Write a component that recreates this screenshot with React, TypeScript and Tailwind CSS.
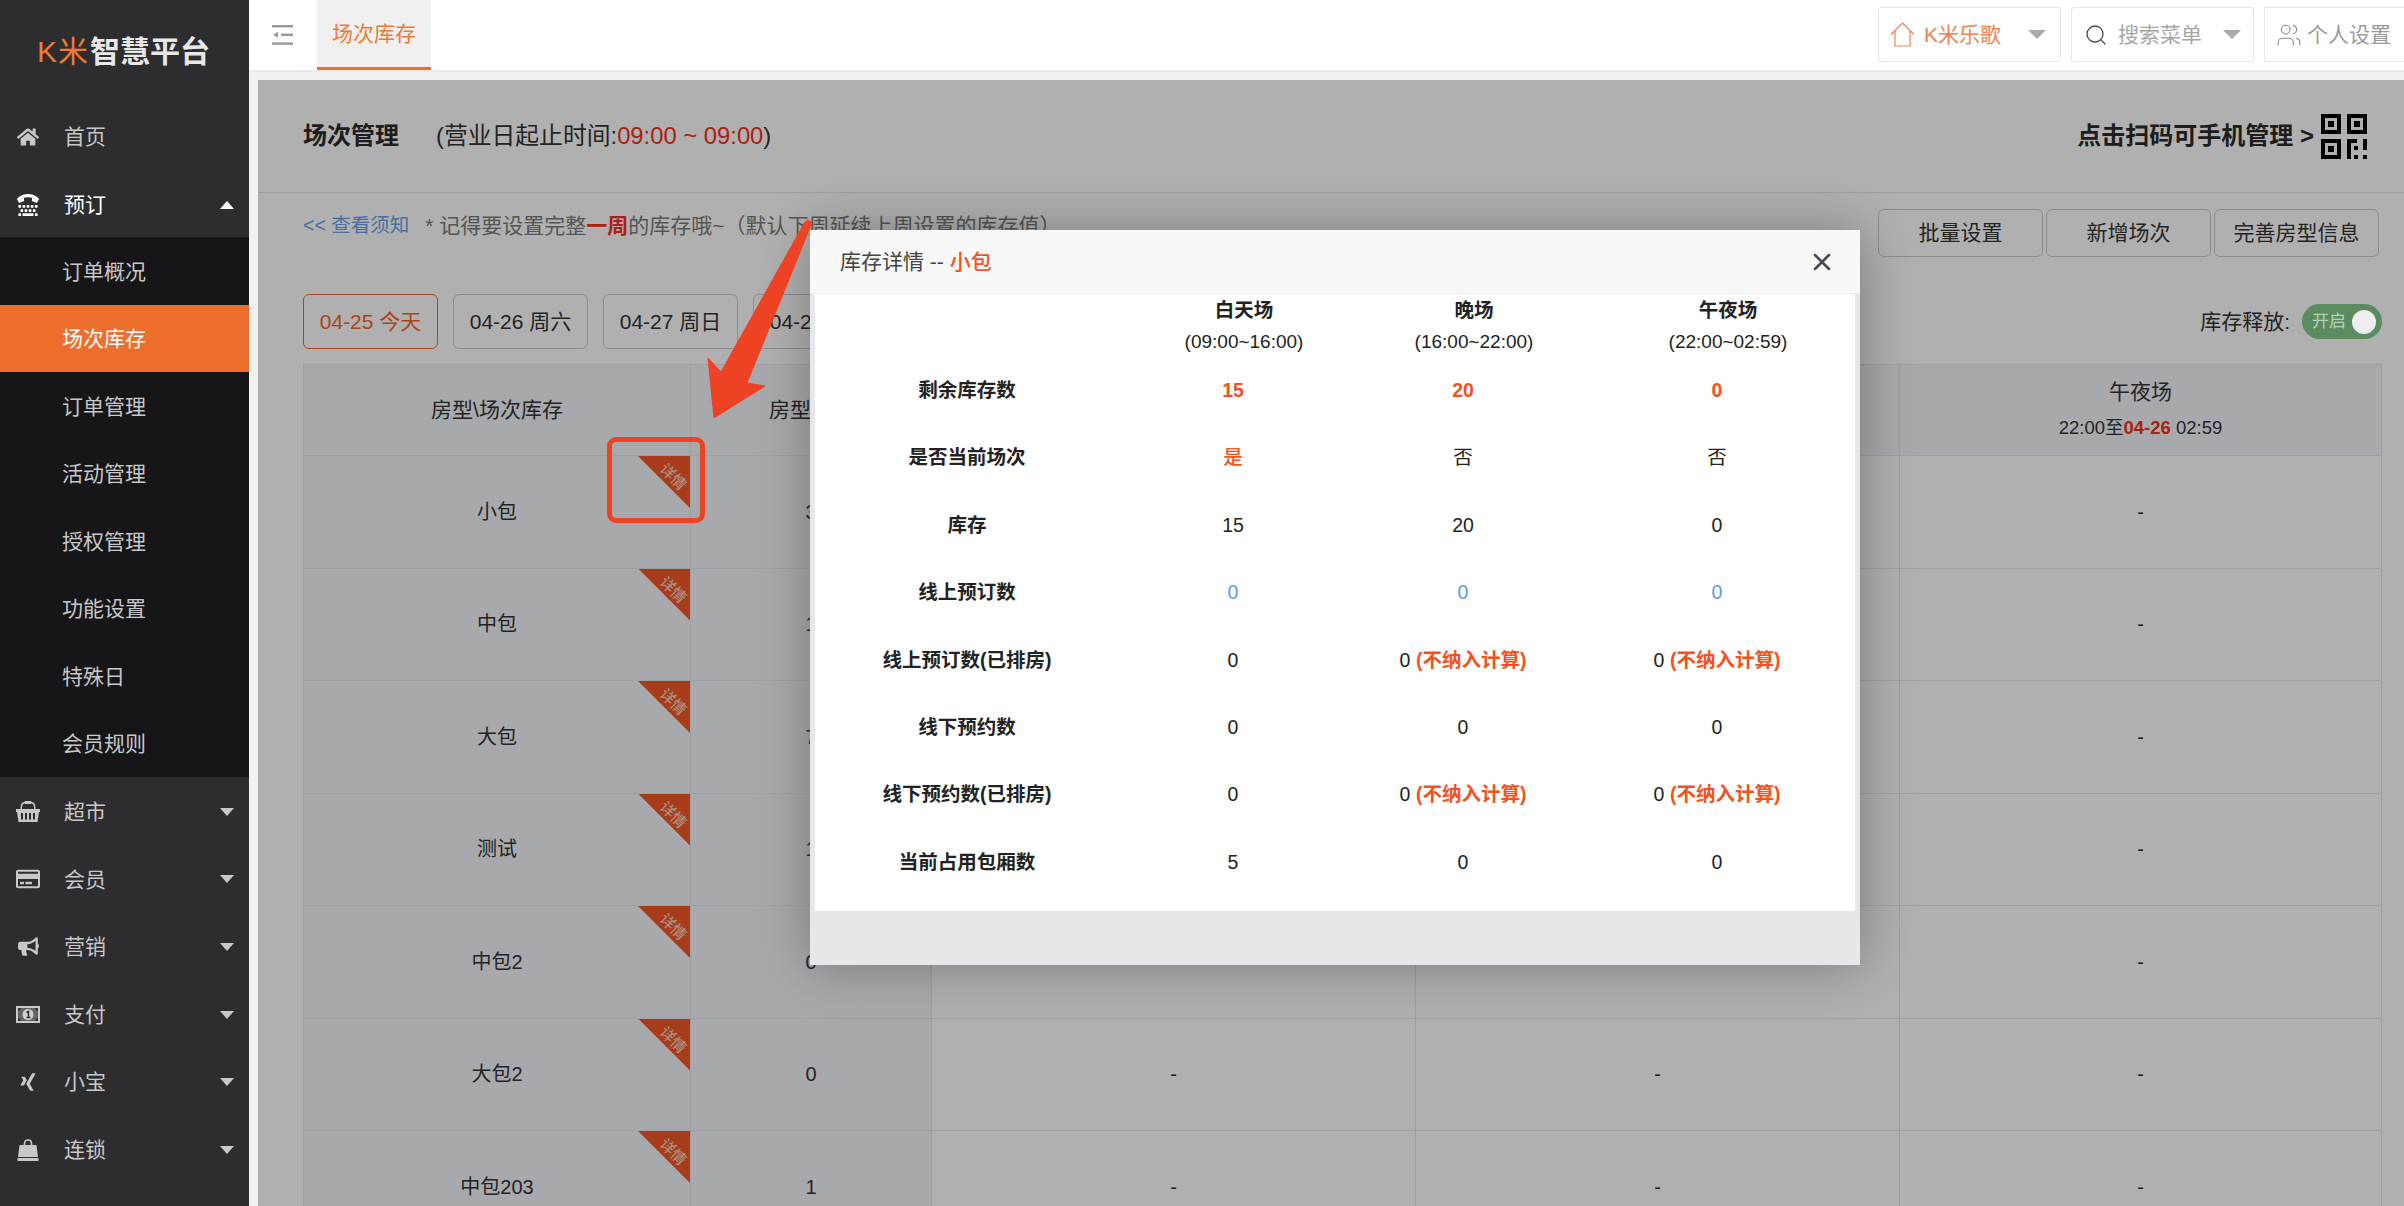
import React from "react";
import { FaHome, FaTty, FaRegCreditCard, FaBullhorn, FaXing } from "react-icons/fa";
import { Search, Users, X } from "lucide-react";

const Caret = ({ up = false, cls = "text-[#c8c8c8]", w = 14, h = 8 }: { up?: boolean; cls?: string; w?: number; h?: number }) => (
  <svg width={w} height={h} viewBox="0 0 14 8" preserveAspectRatio="none" className={cls}>
    <polygon points={up ? "7,0 14,8 0,8" : "0,0 14,0 7,8"} fill="currentColor" />
  </svg>
);

const MoneyIcon = () => (
  <svg width="24" height="17" viewBox="0 0 24 17">
    <rect x="1" y="1" width="22" height="15" fill="none" stroke="currentColor" strokeWidth="2" />
    <path d="M1 5 C4 5 5 3 5 1 H19 C19 3 20 5 23 5 V12 C20 12 19 14 19 16 H5 C5 14 4 12 1 12Z" fill="currentColor" opacity="0.35" />
    <circle cx="12" cy="8.5" r="5.5" fill="#d0d0d0" />
    <path d="M10.5 6.5 L12.5 5.5 V11.5 M10.5 11.5 H14.5" fill="none" stroke="#2d2d30" strokeWidth="1.4" />
  </svg>
);

const BasketIcon = () => (
  <svg width="24" height="21" viewBox="0 0 24 21">
    <path d="M5 9 C5 3 7 1.5 9 1.5 H15 C17 1.5 19 3 19 9" fill="none" stroke="currentColor" strokeWidth="1.5" />
    <rect x="8.5" y="0" width="7" height="3" rx="1" fill="currentColor" />
    <path fillRule="evenodd" fill="currentColor" d="M0 8 H24 V11 H23 L21.5 21 H2.5 L1 11 H0Z M5 12 V18.5 H7 V12Z M9 12 V18.5 H11 V12Z M13 12 V18.5 H15 V12Z M17 12 V18.5 H19 V12Z" />
  </svg>
);

const BagIcon = () => (
  <svg width="22" height="22" viewBox="0 0 22 22">
    <path d="M7.5 7 V4.5 C7.5 2 9 1 11 1 C13 1 14.5 2 14.5 4.5 V7" fill="none" stroke="currentColor" strokeWidth="1.6" />
    <path fill="currentColor" d="M2.5 6 H19.5 L21 18 H1Z" />
    <rect x="0.5" y="19" width="21" height="3" fill="currentColor" />
  </svg>
);

const topMenus = [
  { label: "超市", icon: <BasketIcon /> },
  { label: "会员", icon: <FaRegCreditCard size={24} /> },
  { label: "营销", icon: <FaBullhorn size={21} /> },
  { label: "支付", icon: <MoneyIcon /> },
  { label: "小宝", icon: <FaXing size={20} /> },
  { label: "连锁", icon: <BagIcon /> },
];
const subMenus = ["订单概况", "场次库存", "订单管理", "活动管理", "授权管理", "功能设置", "特殊日", "会员规则"];

function Sidebar() {
  return (
    <aside className="w-[249px] shrink-0 bg-[#2d2d30] text-[21px] text-[#c8c8c8]">
      <div className="h-[102px] pt-[31px] pl-[37px] flex items-start leading-[42px]">
        <span className="text-[30px] font-normal text-[#ee7a35] tracking-[1px]">K米</span>
        <span className="ml-[1px] text-[30px] font-bold text-[#e8e8e8]">智慧平台</span>
      </div>
      <div className="h-[68px] pt-[2px] flex items-center">
        <span className="w-[64px] flex justify-center pr-[8px]"><FaHome size={22} /></span>
        <span>首页</span>
      </div>
      <div className="h-[67px] pt-[2px] flex items-center text-white">
        <span className="w-[64px] flex justify-center pr-[8px]"><FaTty size={22} /></span>
        <span className="flex-1">预订</span>
        <span className="pr-[15px] flex"><Caret up cls="text-white" /></span>
      </div>
      <div className="bg-[#161619]">
        {subMenus.map((s) => (
          <div
            key={s}
            className={`h-[67.5px] pl-[62px] pt-[1px] flex items-center ${s === "场次库存" ? "bg-[#ee6f2d] text-white" : ""}`}
          >
            {s}
          </div>
        ))}
      </div>
      {topMenus.map((m) => (
        <div key={m.label} className="h-[67.6px] pt-[2px] flex items-center">
          <span className="w-[64px] flex justify-center pr-[8px]">{m.icon}</span>
          <span className="flex-1">{m.label}</span>
          <span className="pr-[15px] flex"><Caret /></span>
        </div>
      ))}
    </aside>
  );
}

function TopBar() {
  return (
    <header className="h-[72px] shrink-0 bg-white border-b-2 border-[#e9e9e9] flex items-start">
      <div className="w-[68px] h-[70px] flex items-center pl-[23px]">
        <svg width="21" height="20" viewBox="0 0 21 20">
          <rect x="0" y="0" width="21" height="2.4" fill="#999" />
          <rect x="9" y="8.6" width="12" height="2.4" fill="#999" />
          <polygon points="1,9.8 6,6.8 6,12.8" fill="#999" />
          <rect x="0" y="17.4" width="21" height="2.4" fill="#999" />
        </svg>
      </div>
      <div className="w-[114px] h-[70px] bg-[#f0f0f0] border-b-[3px] border-[#ee6f2d] text-[#ee7a35] text-[21px] flex items-center justify-center">
        场次库存
      </div>
      <div className="flex-1" />
      <div className="mt-[7px] w-[183px] h-[55px] border border-[#e6e6e6] rounded-[3px] flex items-center pl-[11px] pr-[14px] text-[21px] text-[#f08150]">
        <svg width="25" height="25" viewBox="0 0 25 25" fill="none" stroke="currentColor" strokeWidth="1.2">
          <path d="M1 12.5 L12.5 1 L24 12.5 M5 9 V24 H20 V9" />
        </svg>
        <span className="ml-[9px] flex-1">K米乐歌</span>
        <Caret cls="text-[#aaaaaa]" w={18} h={9} />
      </div>
      <div className="ml-[10px] mt-[7px] w-[183px] h-[55px] border border-[#e6e6e6] rounded-[3px] flex items-center pl-[12px] pr-[12px] text-[21px] text-[#a6a6a6]">
        <Search size={24} strokeWidth={1.3} className="text-[#444]" />
        <span className="ml-[10px] flex-1">搜索菜单</span>
        <Caret cls="text-[#aaaaaa]" w={18} h={9} />
      </div>
      <div className="ml-[10px] mt-[7px] flex-1 max-w-[140px] h-[55px] border border-r-0 border-[#e6e6e6] flex items-center pl-[11px] text-[21px] text-[#999]">
        <Users size={26} strokeWidth={1} className="text-[#888]" />
        <span className="ml-[5px]">个人设置</span>
      </div>
    </header>
  );
}

const QrIcon = () => (
  <svg width="46" height="45" viewBox="0 0 46 45">
    <path fill="#000" fillRule="evenodd" d="M0 0H20V20H0ZM4 4V16H16V4ZM7 7H13V13H7Z" />
    <path fill="#000" fillRule="evenodd" d="M26 0H46V20H26ZM30 4V16H42V4ZM33 7H39V13H33Z" />
    <path fill="#000" fillRule="evenodd" d="M0 25H20V45H0ZM4 29V41H16V29ZM7 32H13V38H7Z" />
    <path fill="#000" d="M26 25H36V29H30V45H26ZM33 32H37V36H33ZM42 25H46V36H42ZM33 41H37V45H33ZM42 41H46V45H42Z" />
  </svg>
);

const rows = [
  ["小包", "3"],
  ["中包", "1"],
  ["大包", "7"],
  ["测试", "1"],
  ["中包2", "0"],
  ["大包2", "0"],
  ["中包203", "1"],
];

const cellLine = "border-r border-b border-[#e5e7eb]";

function RoomTable() {
  return (
    <div className="mt-[15px] ml-[45px] mr-[22px] border-l border-t border-[#e5e7eb]">
      <div className="grid grid-cols-[387px_241px_484px_484px_1fr] h-[91px] bg-[#f3f5f9] text-[21px] text-[#333]">
        <div className={`${cellLine} flex items-center justify-center`}>房型\场次库存</div>
        <div className={`${cellLine} flex items-center justify-center`}>房型库存</div>
        {[
          ["白天场", "09:00至16:00"],
          ["晚场", "16:00至22:00"],
        ].map(([a, b]) => (
          <div key={a} className={`${cellLine} flex flex-col items-center justify-center`}>
            <span>{a}</span>
            <span className="text-[18px]">{b}</span>
          </div>
        ))}
        <div className={`${cellLine} flex flex-col items-center justify-center gap-[10px] pb-[2px]`}>
          <span className="text-[21px] leading-[28px]">午夜场</span>
          <span className="text-[18.5px] leading-[24px]">
            22:00至<b className="text-[#f5301c]">04-26</b> 02:59
          </span>
        </div>
      </div>
      {rows.map(([name, n]) => (
        <div key={name} className="grid grid-cols-[387px_241px_484px_484px_1fr] h-[112.5px] text-[20px] text-[#333]">
          <div className={`${cellLine} bg-[#f3f5f9] relative flex items-center justify-center`}>
            {name}
            <div className="absolute top-0 right-0 w-[52px] h-[52px] bg-[#f35726] [clip-path:polygon(0_0,100%_0,100%_100%)]">
              <span className="absolute left-[20px] top-[12px] w-[30px] text-[15px] leading-[18px] text-white/80 rotate-45">详情</span>
            </div>
          </div>
          <div className={`${cellLine} bg-[#f3f5f9] flex items-center justify-center`}>{n}</div>
          <div className={`${cellLine} flex items-center justify-center`}>-</div>
          <div className={`${cellLine} flex items-center justify-center`}>-</div>
          <div className={`${cellLine} flex items-center justify-center`}>-</div>
        </div>
      ))}
    </div>
  );
}

const orange = "text-[#f4511e]";
const Nc = () => <b className={`${orange} font-semibold`}> (不纳入计算)</b>;

const modalRows: { label: string; v: React.ReactNode[] }[] = [
  { label: "剩余库存数", v: [<b className={orange}>15</b>, <b className={orange}>20</b>, <b className={orange}>0</b>] },
  { label: "是否当前场次", v: [<b className={`${orange} font-medium`}>是</b>, "否", "否"] },
  { label: "库存", v: ["15", "20", "0"] },
  { label: "线上预订数", v: [<span className="text-[#5c9ce6]">0</span>, <span className="text-[#5c9ce6]">0</span>, <span className="text-[#5c9ce6]">0</span>] },
  { label: "线上预订数(已排房)", v: ["0", <>0<Nc /></>, <>0<Nc /></>] },
  { label: "线下预约数", v: ["0", "0", "0"] },
  { label: "线下预约数(已排房)", v: ["0", <>0<Nc /></>, <>0<Nc /></>] },
  { label: "当前占用包厢数", v: ["5", "0", "0"] },
];

function Modal() {
  return (
    <div className="absolute z-20 left-[552px] top-[150px] w-[1050px] h-[735px] bg-[#e6e7ea] shadow-[1px_1px_50px_rgba(0,0,0,0.3)] flex flex-col">
      <div className="h-[64px] shrink-0 bg-[#f8f8f8] border-b border-[#eeeeee] flex items-center pl-[30px] pr-[24px] text-[21px] text-[#444]">
        <span className="flex-1">
          库存详情 -- <span className={`${orange} font-medium`}>小包</span>
        </span>
        <X size={28} strokeWidth={2.2} className="text-[#4a4a55]" />
      </div>
      <div className="mx-[5px] h-[617px] bg-white text-[19.5px] text-[#222]">
        <div className="grid grid-cols-[304px_228px_232px_276px] h-[63px]">
          <div />
          {[
            ["白天场", "(09:00~16:00)"],
            ["晚场", "(16:00~22:00)"],
            ["午夜场", "(22:00~02:59)"],
          ].map(([a, b]) => (
            <div key={a} className="pl-[22px] flex flex-col items-center justify-center whitespace-nowrap">
              <span className="font-bold leading-[31px]">{a}</span>
              <span className="text-[19px] leading-[31px]">{b}</span>
            </div>
          ))}
        </div>
        {modalRows.map((r) => (
          <div key={r.label} className="grid grid-cols-[304px_228px_232px_276px] h-[67.4px] items-center text-center">
            <div className="font-bold">{r.label}</div>
            {r.v.map((x, i) => (
              <div key={i}>{x}</div>
            ))}
          </div>
        ))}
      </div>
    </div>
  );
}

function Annotation() {
  return (
    <>
      <svg className="absolute z-30 left-[440px] top-[130px] pointer-events-none" width="130" height="215" viewBox="0 0 130 215">
        <polygon
          fill="#ed4224"
          stroke="#ed4224"
          strokeWidth="1"
          strokeLinejoin="round"
          points="107,12 110,10 113,12 113,15 49,173 67,176 16,208 10,148 23,162"
        />
      </svg>
      <div className="absolute z-30 left-[349px] top-[357px] w-[98px] h-[86px] border-[5px] border-[#ed4224] rounded-[9px]" />
    </>
  );
}

function Content() {
  return (
    <div className="flex-1 min-h-0 bg-[#f1f1f1] pl-[9px] pt-[8px]">
      <div className="relative h-full overflow-hidden bg-white text-[#333]">
        <div className="h-[113px] border-b border-[#e5e5e5] pl-[45px] pr-[37px] flex items-center justify-between">
          <div className="flex items-center">
            <b className="text-[24px] text-[#2b2b2b]">场次管理</b>
            <span className="ml-[37px] text-[23.8px] text-[#333]">
              (营业日起止时间:<span className="text-[#f5301c]">09:00 ~ 09:00</span>)
            </span>
          </div>
          <div className="flex items-center gap-[7px]">
            <b className="text-[24px] text-[#2b2b2b]">点击扫码可手机管理 &gt;</b>
            <QrIcon />
          </div>
        </div>
        <div className="pl-[45px] pr-[25px] pt-[16px] flex items-start justify-between">
          <div className="h-[34px] flex items-center whitespace-nowrap">
            <span className="text-[19.5px] text-[#6a9fe8]">&lt;&lt; 查看须知</span>
            <span className="ml-[16px] text-[21px] text-[#7a7a7a]">
              * 记得要设置完整<b className="text-[#f5301c]">一周</b>的库存哦~（默认下周延续上周设置的库存值）
            </span>
          </div>
          <div className="flex gap-[3px] text-[21px] text-[#333]">
            {["批量设置", "新增场次", "完善房型信息"].map((t) => (
              <div key={t} className="w-[165px] h-[48px] border border-[#cccccc] rounded-[6px] flex items-center justify-center">
                {t}
              </div>
            ))}
          </div>
        </div>
        <div className="mt-[37px] pl-[45px] pr-[22px] flex items-center justify-between">
          <div className="flex gap-[15px] text-[21px] leading-none">
            <div className="w-[135px] h-[55px] border border-[#fa5f2c] rounded-[6px] text-[#fa5f2c] flex items-center justify-center whitespace-nowrap">04-25 今天</div>
            {["04-26 周六", "04-27 周日", "04-28 周一"].map((d) => (
              <div key={d} className="w-[135px] h-[55px] border border-[#cccccc] rounded-[6px] flex items-center justify-center whitespace-nowrap">{d}</div>
            ))}
          </div>
          <div className="flex items-center gap-[12px] text-[21px]">
            <span>库存释放:</span>
            <div className="relative z-20 w-[80px] h-[35px] rounded-full bg-[#5a8c60] flex items-center justify-between pl-[10px] pr-[6px] text-[17px] text-[#b9cfbb]">
              <span>开启</span>
              <span className="w-[24px] h-[24px] rounded-full bg-[#eeeeee]" />
            </div>
          </div>
        </div>
        <RoomTable />
        <div className="absolute inset-0 z-10 bg-black/[0.31]" />
        <Modal />
        <Annotation />
      </div>
    </div>
  );
}

export default function App() {
  return (
    <div className="flex h-screen overflow-hidden [font-family:'Liberation_Sans','Noto_Sans_CJK_SC',sans-serif]">
      <Sidebar />
      <main className="flex-1 min-w-0 flex flex-col">
        <TopBar />
        <Content />
      </main>
    </div>
  );
}
